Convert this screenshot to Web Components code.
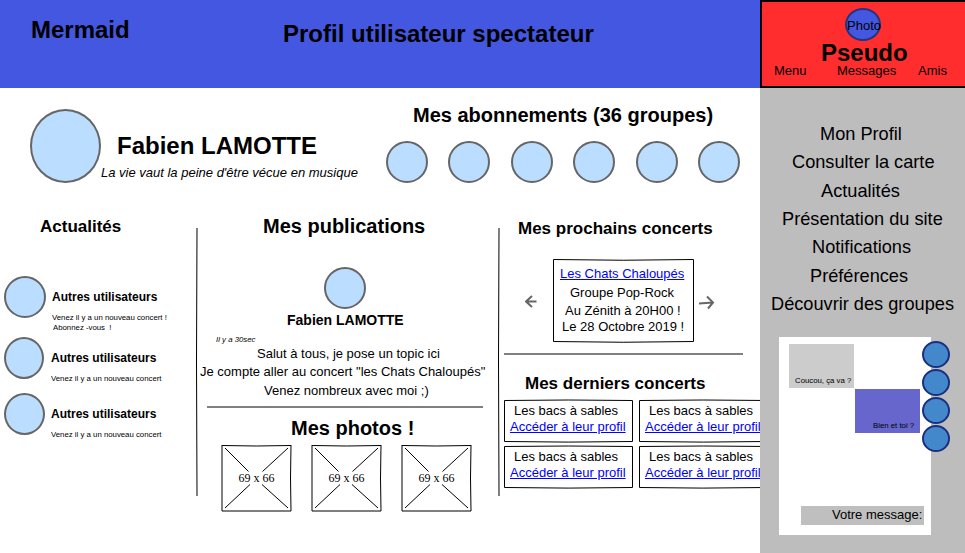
<!DOCTYPE html>
<html lang="fr">
<head>
<meta charset="utf-8">
<title>Mermaid</title>
<style>
html,body{margin:0;padding:0}
body{width:965px;height:553px;overflow:hidden;background:#fff;color:#000;font-family:"Liberation Sans",Arial,sans-serif}
</style>
</head>
<body>
<mermaid-app></mermaid-app>
<script>
const define = (name, html) => {
  const tpl = document.createElement('template');
  tpl.innerHTML = html;
  customElements.define(name, class extends HTMLElement {
    constructor() {
      super();
      this.attachShadow({ mode: 'open' }).append(tpl.content.cloneNode(true));
    }
  });
};

/* One line of text: --s font size, --l line height, --x indent, --t space above */
define('ui-text', `<style>
:host{display:block;white-space:pre;flex:none;font-size:var(--s,13px);line-height:var(--l,15px);height:var(--l,15px);margin:var(--t,0) 0 0 var(--x,0)}
:host([bold]){font-weight:700}
:host([italic]){font-style:italic}
:host([size="24"]){--s:24px;--l:27px}
:host([size="20"]){--s:20px;--l:22px}
:host([size="18"]){--s:18.2px;--l:21px}
:host([size="17"]){--s:17px;--l:19px}
:host([size="14"]){--s:14px;--l:16px}
:host([size="12"]){--s:12px;--l:14px}
:host([size="tiny"]){--s:7.8px;--l:9px}
:host([link]){color:#00f;text-decoration:underline}
</style><slot></slot>`);

define('ui-avatar', `<style>
:host{display:flex;flex:none;align-items:center;justify-content:center;box-sizing:border-box;width:var(--w,42px);height:var(--h,42px);border:2px solid var(--line,#666);border-radius:50%;background:var(--fill,#bdf);margin:var(--t,0) 0 0 var(--x,0)}
</style><slot></slot>`);

define('ui-rule', `<style>
:host{display:block;flex:none;height:2px;background:#808080;margin:var(--t,0) 0 0 var(--x,0);width:var(--w)}
</style>`);

/* Hand-drawn vertical separator */
define('ui-divider', `<style>
:host{display:block;width:4px;height:268px;margin-top:23px}
svg{display:block}
</style><svg width="4" height="268" fill="none" stroke="#000"><path d="M2 0Q1 134 2 268"/></svg>`);

define('news-item', `<style>
:host{display:flex;height:var(--row);align-items:flex-start}
</style><slot name="avatar"></slot><div><slot></slot></div>`);

define('photo-box', `<style>
:host{display:grid;width:71px;height:68px}
svg,span{grid-area:1/1}
span{place-self:center;font:12px/12px "Liberation Serif","Times New Roman",serif;background:#fff;white-space:pre}
</style><svg width="71" height="68" fill="none" stroke="#000">
<path d="M1 1.500Q35 2.500 70 1.500M70 1Q69 34 70 67M70 67H1M1 67V1"/>
<path d="M4 4L27.500 27.500M67 4L41.500 27.500M4 64L29 40.500M67 64L41 40.500"/></svg><span><slot></slot></span>`);

/* Card with a slightly bowed outline */
define('concert-card', `<style>
:host{display:grid;flex:none;width:129px;height:44px}
svg{grid-area:1/1;display:block}
div{grid-area:1/1}
</style><svg width="129" height="44" fill="none" stroke="#000"><path d="M.5 1.500Q64 .5 128.500 1.500V42.500Q64 43.700 .5 42.500Z"/></svg><div>
<ui-text style="--x:10px;--t:4px"><slot></slot></ui-text>
<ui-text link style="--x:6px;--t:1px">Accéder à leur profil</ui-text></div>`);

define('next-concert', `<style>
:host{display:flex;height:84px;margin-top:21px;padding-left:24px}
.arrow{flex:none;margin-top:36px}
.card{display:grid;width:141px;height:84px}
.card svg,.card div{grid-area:1/1}
</style>
<svg class="arrow" width="28" height="14" fill="none" stroke="#666" stroke-width="2"><path d="M11.500 6.500H1M7 1L1 6.500L7 12"/></svg>
<div class="card"><svg width="141" height="84" fill="none" stroke="#000"><path d="M.5 .5Q70 2 140.500 .5V82.500Q70 84 .5 82.500Z"/></svg>
<div>
<ui-text link style="--x:7px;--t:7px">Les Chats Chaloupés</ui-text>
<ui-text style="--x:17px;--t:4px">Groupe Pop-Rock</ui-text>
<ui-text style="--x:12px;--t:3px">Au Zénith à 20H00 !</ui-text>
<ui-text style="--x:9px;--t:1px">Le 28 Octobre 2019 !</ui-text>
</div></div>
<svg class="arrow" style="margin-left:5px" width="16" height="16" fill="none" stroke="#666" stroke-width="2"><path d="M0 8.500L14 7.500M8 1.500L14 7.500L9 13.500"/></svg>`);

define('app-header', `<style>
:host{display:flex;height:88px;background:#4457e0}
</style>
<ui-text bold size="24" style="--x:31px;--t:16px;width:252px">Mermaid</ui-text>
<ui-text bold size="24" style="--t:20px">Profil utilisateur spectateur</ui-text>`);

define('profile-band', `<style>
:host{display:flex;height:117px}
.id{width:285px;flex:none}
.row{display:flex;gap:20.400px;padding-top:15px}
</style>
<ui-avatar style="--w:71px;--h:74px;--x:30px;--t:21px"></ui-avatar>
<div class="id"><ui-text bold size="24" style="--x:16px;--t:44px">Fabien LAMOTTE</ui-text>
<ui-text italic style="--x:0;--t:6px">La vie vaut la peine d'être vécue en musique</ui-text></div>
<div><ui-text bold size="20" style="--x:27px;--t:16px">Mes abonnements (36 groupes)</ui-text>
<div class="row"><ui-avatar></ui-avatar><ui-avatar></ui-avatar><ui-avatar></ui-avatar><ui-avatar></ui-avatar><ui-avatar></ui-avatar><ui-avatar></ui-avatar></div></div>`);

define('news-column', `<style>
:host{display:block}
</style>
<ui-text bold size="17" style="--x:40px;--t:12px">Actualités</ui-text>
<news-item style="--row:61px;margin-top:40px"><ui-avatar slot="avatar" style="--x:4px"></ui-avatar>
<ui-text bold size="12" style="--x:6px;--t:14px">Autres utilisateurs</ui-text>
<ui-text size="tiny" style="--x:6px;--t:9px">Venez il y a un nouveau concert !</ui-text>
<ui-text size="tiny" style="--x:7px;--t:1px">Abonnez -vous  !</ui-text></news-item>
<news-item style="--row:56px"><ui-avatar slot="avatar" style="--x:4px;--w:40px"></ui-avatar>
<ui-text bold size="12" style="--x:7px;--t:14px">Autres utilisateurs</ui-text>
<ui-text size="tiny" style="--x:7px;--t:9px">Venez il y a un nouveau concert</ui-text></news-item>
<news-item style="--row:56px"><ui-avatar slot="avatar" style="--x:4px;--w:41px"></ui-avatar>
<ui-text bold size="12" style="--x:6px;--t:14px">Autres utilisateurs</ui-text>
<ui-text size="tiny" style="--x:6px;--t:9px">Venez il y a un nouveau concert</ui-text></news-item>`);

define('posts-column', `<style>
:host{display:flex;flex-direction:column}
.photos{display:flex;gap:19px;margin:5px 0 0 22px}
</style>
<ui-text bold size="20" style="--x:64px;--t:10px">Mes publications</ui-text>
<ui-avatar style="--x:125px;--t:30px"></ui-avatar>
<ui-text bold size="14" style="--x:88px;--t:3px">Fabien LAMOTTE</ui-text>
<ui-text italic size="tiny" style="--x:17px;--t:7px">Il y a 30sec</ui-text>
<ui-text style="--x:58px;--t:2px">Salut à tous, je pose un topic ici</ui-text>
<ui-text style="--x:1px;--t:3px">Je compte aller au concert "les Chats Chaloupés"</ui-text>
<ui-text style="--x:65px;--t:4px">Venez nombreux avec moi ;)</ui-text>
<ui-rule style="--x:8px;--t:8px;--w:276px"></ui-rule>
<ui-text bold size="20" style="--x:92px;--t:9px">Mes photos !</ui-text>
<div class="photos"><photo-box>69 x 66</photo-box><photo-box>69 x 66</photo-box><photo-box>69 x 66</photo-box></div>`);

define('concerts-column', `<style>
:host{display:flex;flex-direction:column;overflow:hidden}
.past{display:grid;grid-template-columns:129px 129px;gap:2px 6px;margin:6px 0 0 3px}
</style>
<ui-text bold size="17" style="--x:17px;--t:14px">Mes prochains concerts</ui-text>
<next-concert></next-concert>
<ui-rule style="--x:3px;--t:10px;--w:239px"></ui-rule>
<ui-text bold size="17" style="--x:24px;--t:19px">Mes derniers concerts</ui-text>
<div class="past"><concert-card>Les bacs à sables</concert-card><concert-card>Les bacs à sables</concert-card><concert-card>Les bacs à sables</concert-card><concert-card>Les bacs à sables</concert-card></div>`);

define('account-panel', `<style>
:host{display:block;box-sizing:border-box;height:88px;background:#ff2d2d;border:solid #000;border-width:2px 0 2px 2px}
nav{display:flex;margin-top:-3px}
</style>
<ui-avatar style="--x:83px;--t:6px;--w:36px;--h:33px;--line:#22347f;--fill:#4457e0"><ui-text style="--x:2px;--t:2px">Photo</ui-text></ui-avatar>
<ui-text bold size="24" style="--x:59px;--t:-2px">Pseudo</ui-text>
<nav><ui-text style="--x:12px;width:63px">Menu</ui-text><ui-text style="width:81px">Messages</ui-text><ui-text>Amis</ui-text></nav>`);

define('side-menu', `<style>
:host{display:block;height:249px;padding-top:36px;box-sizing:border-box}
</style>
<ui-text size="18" style="--x:60px">Mon Profil</ui-text>
<ui-text size="18" style="--x:32px;--t:7px">Consulter la carte</ui-text>
<ui-text size="18" style="--x:61px;--t:8px">Actualités</ui-text>
<ui-text size="18" style="--x:22px;--t:7px">Présentation du site</ui-text>
<ui-text size="18" style="--x:52px;--t:7px">Notifications</ui-text>
<ui-text size="18" style="--x:50px;--t:8px">Préférences</ui-text>
<ui-text size="18" style="--x:11px;--t:7px">Découvrir des groupes</ui-text>`);

define('chat-bubble', `<style>
:host{display:flex;align-items:flex-end;width:65px;height:44px;background:var(--bg);margin:var(--t,0) 0 0 var(--x,0)}
ui-text{margin:0 0 3px var(--i,6px)}
</style><ui-text size="tiny"><slot></slot></ui-text>`);

/* Chat window; the contact avatars overlap its right edge */
define('chat-window', `<style>
:host{display:grid;grid-template-columns:152px;width:152px;height:198px;margin-left:19px}
.panel{grid-area:1/1;background:#fff;height:198px;display:flex;flex-direction:column}
.contacts{grid-area:1/1;display:flex;flex-direction:column;gap:1px;padding:4px 0 0 143px}
.input{width:123px;height:19px;background:#bfbfbf;margin:73px 0 0 22px;display:flex}
</style>
<div class="panel"><chat-bubble style="--bg:#ccc;--x:10px;--t:7px">Coucou, ça va ?</chat-bubble>
<chat-bubble style="--bg:#66c;--x:76px;--t:1px;--i:18px">Bien et toi ?</chat-bubble>
<div class="input"><ui-text style="--x:31px;--t:1px">Votre message:</ui-text></div></div>
<div class="contacts" style="--w:28px;--h:27px;--line:#1a2f80;--fill:#48c"><ui-avatar></ui-avatar><ui-avatar></ui-avatar><ui-avatar></ui-avatar><ui-avatar></ui-avatar></div>`);

define('mermaid-app', `<style>
:host{display:grid;grid-template-columns:760px 205px;width:965px;height:553px;overflow:hidden}
main{min-width:0}
aside{background:#bdbdbd}
.cols{display:grid;grid-template-columns:195px 4px 298px 4px 259px}
</style>
<main><app-header></app-header><profile-band></profile-band>
<div class="cols"><news-column></news-column><ui-divider></ui-divider><posts-column></posts-column><ui-divider></ui-divider><concerts-column></concerts-column></div></main>
<aside><account-panel></account-panel><side-menu></side-menu><chat-window></chat-window></aside>`);
</script>
</body>
</html>
